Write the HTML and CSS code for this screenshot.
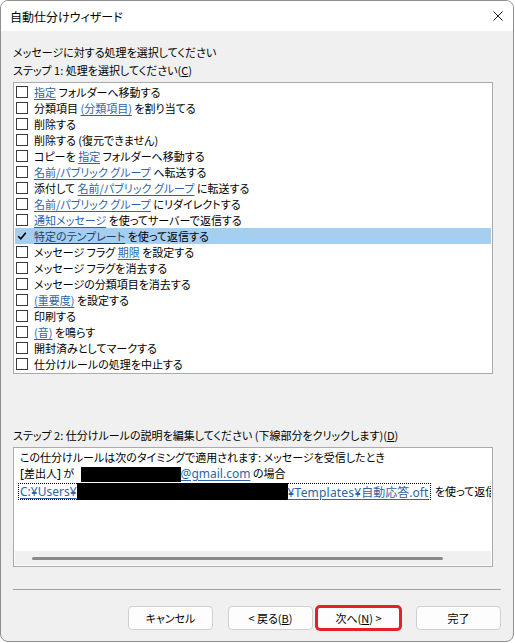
FILE: index.html
```html
<!DOCTYPE html>
<html lang="ja">
<head>
<meta charset="utf-8">
<link rel="stylesheet" href="styles.css">
</head>
<body>
<div class="window">
  <div class="titlebar">
    <span class="title">自動仕分けウィザード</span>
    <svg class="close" width="10" height="10" viewBox="0 0 10 10"><path d="M0.5 0.5 L9.5 9.5 M9.5 0.5 L0.5 9.5" stroke="#1a1a1a" stroke-width="1" fill="none"/></svg>
  </div>
  <div class="body">
    <div class="label">メッセージに対する処理を選択してください</div>
    <div class="label">ステップ 1: 処理を選択してください(<u>C</u>)</div>
    <div class="listbox">
      <div class="row"><span class="cb"></span><span class="txt"><span class="lk">指定</span> フォルダーへ移動する</span></div>
      <div class="row"><span class="cb"></span><span class="txt">分類項目 <span class="lk">(分類項目)</span> を割り当てる</span></div>
      <div class="row"><span class="cb"></span><span class="txt">削除する</span></div>
      <div class="row"><span class="cb"></span><span class="txt">削除する (復元できません)</span></div>
      <div class="row"><span class="cb"></span><span class="txt">コピーを <span class="lk">指定</span> フォルダーへ移動する</span></div>
      <div class="row"><span class="cb"></span><span class="txt"><span class="lk">名前/パブリック グループ</span> へ転送する</span></div>
      <div class="row"><span class="cb"></span><span class="txt">添付して <span class="lk">名前/パブリック グループ</span> に転送する</span></div>
      <div class="row"><span class="cb"></span><span class="txt"><span class="lk">名前/パブリック グループ</span> にリダイレクトする</span></div>
      <div class="row"><span class="cb"></span><span class="txt"><span class="lk">通知メッセージ</span> を使ってサーバーで返信する</span></div>
      <div class="row sel"><span class="cb checked"><svg width="10" height="10" viewBox="0 0 10 10"><path d="M1.2 5.2 L3.8 7.8 L8.8 1.8" stroke="#000" stroke-width="1.6" fill="none"/></svg></span><span class="txt"><span class="lk dark">特定のテンプレート</span> を使って返信する</span></div>
      <div class="row"><span class="cb"></span><span class="txt">メッセージ フラグ <span class="lk">期限</span> を設定する</span></div>
      <div class="row"><span class="cb"></span><span class="txt">メッセージ フラグを消去する</span></div>
      <div class="row"><span class="cb"></span><span class="txt">メッセージの分類項目を消去する</span></div>
      <div class="row"><span class="cb"></span><span class="txt"><span class="lk">(重要度)</span> を設定する</span></div>
      <div class="row"><span class="cb"></span><span class="txt">印刷する</span></div>
      <div class="row"><span class="cb"></span><span class="txt"><span class="lk">(音)</span> を鳴らす</span></div>
      <div class="row"><span class="cb"></span><span class="txt">開封済みとしてマークする</span></div>
      <div class="row"><span class="cb"></span><span class="txt">仕分けルールの処理を中止する</span></div>
    </div>
    <div class="label step2">ステップ 2: 仕分けルールの説明を編集してください (下線部分をクリックします)(<u>D</u>)</div>
    <div class="desc">
      <div class="lines">
        <div class="line l1">この仕分けルールは次のタイミングで適用されます: メッセージを受信したとき</div>
        <div class="line l2"><span class="en">[</span>差出人<span class="en">]</span> が <span class="redact r1"></span><span class="lk en">@gmail.com</span> の場合</div>
        <div class="line l3"><span class="focus"><span class="lk en">C:¥Users¥</span><span class="redact r2"></span><span class="lk"><span class="en wide">¥Templates¥</span><span class="big">自動応答</span><span class="en">.oft</span></span></span> を使って返信する</div>
      </div>
      <div class="hscroll"><div class="thumb"></div></div>
    </div>
    <div class="sep"></div>
    <div class="buttons">
      <div class="btn cancel">キャンセル</div>
      <div class="btn back">&lt; 戻る(<u>B</u>)</div>
      <div class="btn next">次へ(<u>N</u>) &gt;</div>
      <div class="btn finish">完了</div>
    </div>
  </div>
</div>
</body>
</html>
```

FILE: styles.css
```css
html, body {
  margin: 0;
  padding: 0;
  background: #ffffff;
}
body {
  font-family: "Noto Sans CJK JP", "Noto Sans", sans-serif;
  font-size: 11px;
  color: #000;
  font-feature-settings: "palt";
}
.window {
  width: 514px;
  height: 642px;
  box-sizing: border-box;
  border: 1px solid #8f8f8f;
  border-radius: 8px;
  overflow: hidden;
  background: #f0f0f0;
  display: flex;
  flex-direction: column;
}
.titlebar {
  height: 30px;
  flex: none;
  background: #ffffff;
  display: flex;
  align-items: center;
  justify-content: space-between;
  padding: 0 10px 0 9px;
}
.title {
  font-size: 12px;
}
.close {
  display: block;
}
.body {
  flex: 1;
  padding: 12px 0 0 12px;
}
.label {
  line-height: 18px;
  white-space: nowrap;
}
.listbox {
  margin-top: 3px;
  width: 480px;
  height: 292px;
  box-sizing: border-box;
  border: 1px solid #a9a9ae;
  background: #ffffff;
  padding: 1px;
}
.row {
  height: 16px;
  display: flex;
  align-items: center;
  padding-left: 1px;
  white-space: nowrap;
}
.row.sel {
  background: #a4cff1;
}
.cb {
  width: 12px;
  height: 12px;
  box-sizing: border-box;
  border: 1px solid #3a3a3a;
  background: #ffffff;
  margin-right: 6px;
  flex: none;
  display: flex;
  align-items: center;
  justify-content: center;
}
.cb.checked {
  border-color: transparent;
  background: transparent;
}
.cb svg {
  display: block;
}
.lk {
  color: #2e64a6;
  text-decoration: underline;
  text-underline-offset: 2px;
}
.lk.dark {
  color: #1f3e66;
}
.en {
  font-family: "Noto Sans", sans-serif;
  font-size: 12px;
}
.en.wide {
  letter-spacing: 0.2px;
}
.big {
  font-size: 12px;
}
.step2 {
  margin-top: 52px;
}
.desc {
  margin-top: 3px;
  width: 480px;
  height: 120px;
  box-sizing: border-box;
  border: 1px solid #a9a9ae;
  background: #ffffff;
  padding: 1px;
  display: flex;
  flex-direction: column;
}
.lines {
  flex: 1;
  overflow: hidden;
  padding-left: 5px;
}
.line {
  white-space: pre;
}
.l1 {
  height: 16px;
  line-height: 16px;
}
.l2 {
  height: 17px;
  line-height: 17px;
}
.l3 {
  height: 19px;
  line-height: 17px;
  padding-top: 1px;
  box-sizing: border-box;
}
.redact {
  display: inline-block;
  background: #000;
}
.r1 {
  width: 100px;
  height: 15px;
  margin-left: 4px;
  vertical-align: bottom;
}
.r2 {
  width: 211px;
  height: 17px;
}
.focus {
  display: inline-flex;
  align-items: center;
  vertical-align: top;
  height: 17px;
  box-sizing: border-box;
  border: 1px dotted #000;
  padding: 0 2px 0 1px;
  margin-left: -2px;
  margin-right: 1px;
}
.hscroll {
  height: 14px;
  flex: none;
  background: #f0f0f0;
  display: flex;
  align-items: center;
  padding-left: 17px;
}
.thumb {
  width: 411px;
  height: 3px;
  border-radius: 2px;
  background: #8a8a8a;
}
.sep {
  margin-top: 22px;
  width: 488px;
  height: 1px;
  background: #a0a0a0;
}
.buttons {
  margin-top: 16px;
  display: flex;
  padding-left: 115px;
}
.btn {
  width: 85px;
  height: 24px;
  box-sizing: border-box;
  border: 1px solid #d0d0d0;
  border-radius: 4px;
  background: #fdfdfd;
  display: flex;
  align-items: center;
  justify-content: center;
  white-space: pre;
}
.back {
  margin-left: 15px;
}
.next {
  margin-left: 3px;
  outline: 3px solid #e6202a;
  outline-offset: -2px;
}
.finish {
  margin-left: 15px;
}
```
